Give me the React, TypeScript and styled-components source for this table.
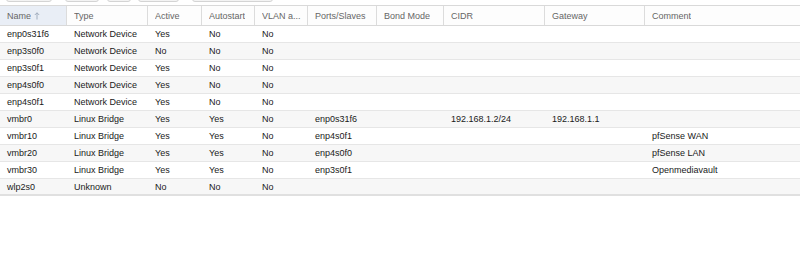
import React from "react";
import styled, { createGlobalStyle } from "styled-components";

const Global = createGlobalStyle`
  html, body { margin: 0; padding: 0; background: #fff; }
  body { font-family: "Liberation Sans", Arial, sans-serif; overflow: hidden; }
`;

const COLS = "67px 81px 54px 53px 53px 69px 67px 101px 100px 1fr";

const Page = styled.div`
  width: 800px;
  height: 259px;
  display: flex;
  flex-direction: column;
  background: #fff;
`;

const Toolbar = styled.div`
  display: flex;
  align-items: flex-end;
  height: 22px;
  margin-top: -20px;
  padding-left: 6px;
`;

const ToolButton = styled.div<{ $w: number; $gap: number }>`
  width: ${(p) => p.$w}px;
  height: 22px;
  margin-right: ${(p) => p.$gap}px;
  box-sizing: border-box;
  border: 1px solid #d4d4d4;
  border-radius: 3px;
  background: #f3f3f3;
`;

const Grid = styled.div`
  margin-top: 3px;
  display: flex;
  flex-direction: column;
`;

const HeaderRow = styled.div`
  display: grid;
  grid-template-columns: ${COLS};
  height: 21px;
  box-sizing: border-box;
  border-top: 1px solid #d9d9d9;
  border-bottom: 1px solid #d9d9d9;
  background: #fdfdfd;
`;

const HeaderCell = styled.div<{ $sorted?: boolean; $last?: boolean }>`
  display: flex;
  align-items: center;
  gap: 3px;
  padding-left: 7px;
  box-sizing: border-box;
  border-right: ${(p) => (p.$last ? "none" : "1px solid #dcdcdc")};
  background: ${(p) => (p.$sorted ? "#e9eef6" : "transparent")};
  color: #666;
  font-size: 9px;
  white-space: nowrap;
  overflow: hidden;
  text-overflow: ellipsis;
  min-width: 0;
`;

const HeaderLabel = styled.span`
  overflow: hidden;
  text-overflow: ellipsis;
  white-space: nowrap;
`;

const Row = styled.div<{ $alt: boolean; $last: boolean }>`
  display: grid;
  grid-template-columns: ${COLS};
  height: 17px;
  box-sizing: border-box;
  background: ${(p) => (p.$alt ? "#f7f7f7" : "#fff")};
  border-bottom: ${(p) => (p.$last ? "2px solid #e0e0e0" : "1px solid #e6e6e6")};
`;

const Cell = styled.div`
  display: flex;
  align-items: center;
  padding-left: 7px;
  font-size: 9px;
  color: #1a1a1a;
  white-space: nowrap;
  overflow: hidden;
`;

const SortArrow = () => (
  <svg width="6" height="8" viewBox="0 0 6 8" fill="none" stroke="#9aa6b8" strokeWidth="0.9">
    <path d="M3 7.5V0.8M0.8 3L3 0.8L5.2 3" />
  </svg>
);

const headers = [
  "Name",
  "Type",
  "Active",
  "Autostart",
  "VLAN aware",
  "Ports/Slaves",
  "Bond Mode",
  "CIDR",
  "Gateway",
  "Comment",
];

const rows: string[][] = [
  ["enp0s31f6", "Network Device", "Yes", "No", "No", "", "", "", "", ""],
  ["enp3s0f0", "Network Device", "No", "No", "No", "", "", "", "", ""],
  ["enp3s0f1", "Network Device", "Yes", "No", "No", "", "", "", "", ""],
  ["enp4s0f0", "Network Device", "Yes", "No", "No", "", "", "", "", ""],
  ["enp4s0f1", "Network Device", "Yes", "No", "No", "", "", "", "", ""],
  ["vmbr0", "Linux Bridge", "Yes", "Yes", "No", "enp0s31f6", "", "192.168.1.2/24", "192.168.1.1", ""],
  ["vmbr10", "Linux Bridge", "Yes", "Yes", "No", "enp4s0f1", "", "", "", "pfSense WAN"],
  ["vmbr20", "Linux Bridge", "Yes", "Yes", "No", "enp4s0f0", "", "", "", "pfSense LAN"],
  ["vmbr30", "Linux Bridge", "Yes", "Yes", "No", "enp3s0f1", "", "", "", "Openmediavault"],
  ["wlp2s0", "Unknown", "No", "No", "No", "", "", "", "", ""],
];

const buttons = [
  { w: 46, gap: 13 },
  { w: 34, gap: 8 },
  { w: 24, gap: 7 },
  { w: 41, gap: 13 },
  { w: 81, gap: 0 },
];

export default function App() {
  return (
    <Page>
      <Global />
      <Toolbar>
        {buttons.map((b, i) => (
          <ToolButton key={i} $w={b.w} $gap={b.gap} />
        ))}
      </Toolbar>
      <Grid>
        <HeaderRow>
          {headers.map((h, i) => (
            <HeaderCell key={h} $sorted={i === 0} $last={i === headers.length - 1}>
              <HeaderLabel>{h === "VLAN aware" ? "VLAN a..." : h}</HeaderLabel>
              {i === 0 && <SortArrow />}
            </HeaderCell>
          ))}
        </HeaderRow>
        {rows.map((r, i) => (
          <Row key={r[0]} $alt={i % 2 === 1} $last={i === rows.length - 1}>
            {r.map((c, j) => (
              <Cell key={j}>{c}</Cell>
            ))}
          </Row>
        ))}
      </Grid>
    </Page>
  );
}
